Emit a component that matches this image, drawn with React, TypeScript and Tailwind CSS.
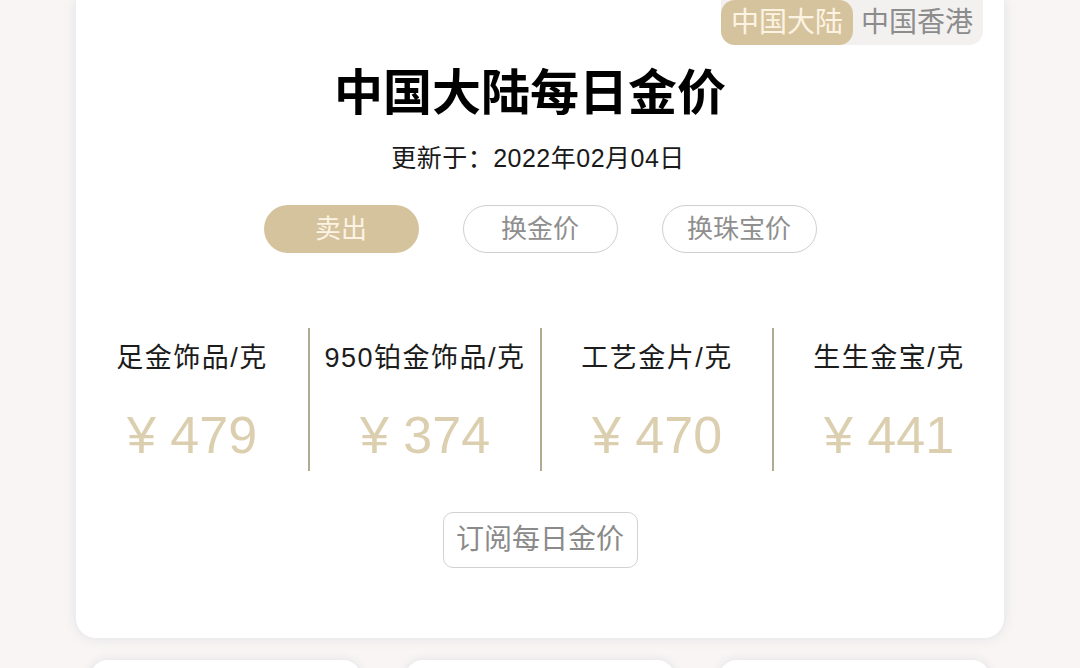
import React from 'react';

const prices = [
  { label: '足金饰品/克', value: '479' },
  { label: '950铂金饰品/克', value: '374' },
  { label: '工艺金片/克', value: '470' },
  { label: '生生金宝/克', value: '441' },
];

const font = "font-['Helvetica','Liberation_Sans','Noto_Sans_CJK_SC',sans-serif]";

const App: React.FC = () => {
  return (
    <div className={`w-[1080px] h-[668px] overflow-hidden bg-[#f8f5f4] ${font}`}>
      <div className="mx-[76px] bg-white rounded-b-[20px] shadow-[0_0_12px_rgba(200,200,215,0.45)] pb-[70px]">
        {/* region toggle */}
        <div className="flex justify-end pr-[21px]">
          <div className="flex h-[45px] rounded-b-[14px] bg-[#f3f1f0] text-[28px] leading-none">
            <span className="flex items-center px-[10px] rounded-[14px] bg-[#d5c39d] text-[#fdf3e3]">中国大陆</span>
            <span className="flex items-center pl-[8px] pr-[10px] text-[#8c8c8c]">中国香港</span>
          </div>
        </div>

        <h1 className="mt-[24px] pr-[20px] text-center text-[49px] leading-none font-bold text-black">中国大陆每日金价</h1>
        <p className="mt-[28px] pr-[4px] text-center text-[25px] leading-none tracking-[0.5px] text-[#1a1a1a]">更新于：2022年02月04日</p>

        <div className="mt-[34px] flex justify-center gap-[44px] text-[26px] leading-none">
          <button className="w-[155px] h-[48px] rounded-full bg-[#d5c39d] text-[#fcf3e4]">卖出</button>
          <button className="w-[155px] h-[48px] rounded-full border-[1.5px] border-[#cfcfcf] text-[#8f8f8f]">换金价</button>
          <button className="w-[155px] h-[48px] rounded-full border-[1.5px] border-[#cfcfcf] text-[#8f8f8f]">换珠宝价</button>
        </div>

        <div className="mt-[75px] grid grid-cols-4">
          {prices.map((p, i) => (
            <div
              key={p.label}
              className={`h-[143px] flex flex-col items-center ${i > 0 ? 'border-l-2 border-[#b3aa92]' : ''}`}
            >
              <div className="mt-[17px] text-[27px] leading-none tracking-[1.5px] text-[#1c1c1c]">{p.label}</div>
              <div className="mt-[37px] text-[52px] leading-none font-light text-[#dccfaf]">¥ {p.value}</div>
            </div>
          ))}
        </div>

        <div className="mt-[41px] flex justify-center">
          <button className="w-[195px] h-[56px] rounded-[10px] border-[1.5px] border-[#d2d2d2] text-[28px] leading-none text-[#8a8a8a]">
            订阅每日金价
          </button>
        </div>
      </div>

      {/* next row of cards, cut off by the viewport */}
      <div className="mt-[22px] flex gap-[44px] px-[90px]">
        <div className="flex-1 h-[40px] bg-white rounded-t-[18px] shadow-[0_0_10px_rgba(200,200,215,0.45)]" />
        <div className="flex-1 h-[40px] bg-white rounded-t-[18px] shadow-[0_0_10px_rgba(200,200,215,0.45)]" />
        <div className="flex-1 h-[40px] bg-white rounded-t-[18px] shadow-[0_0_10px_rgba(200,200,215,0.45)]" />
      </div>
    </div>
  );
};

export default App;
